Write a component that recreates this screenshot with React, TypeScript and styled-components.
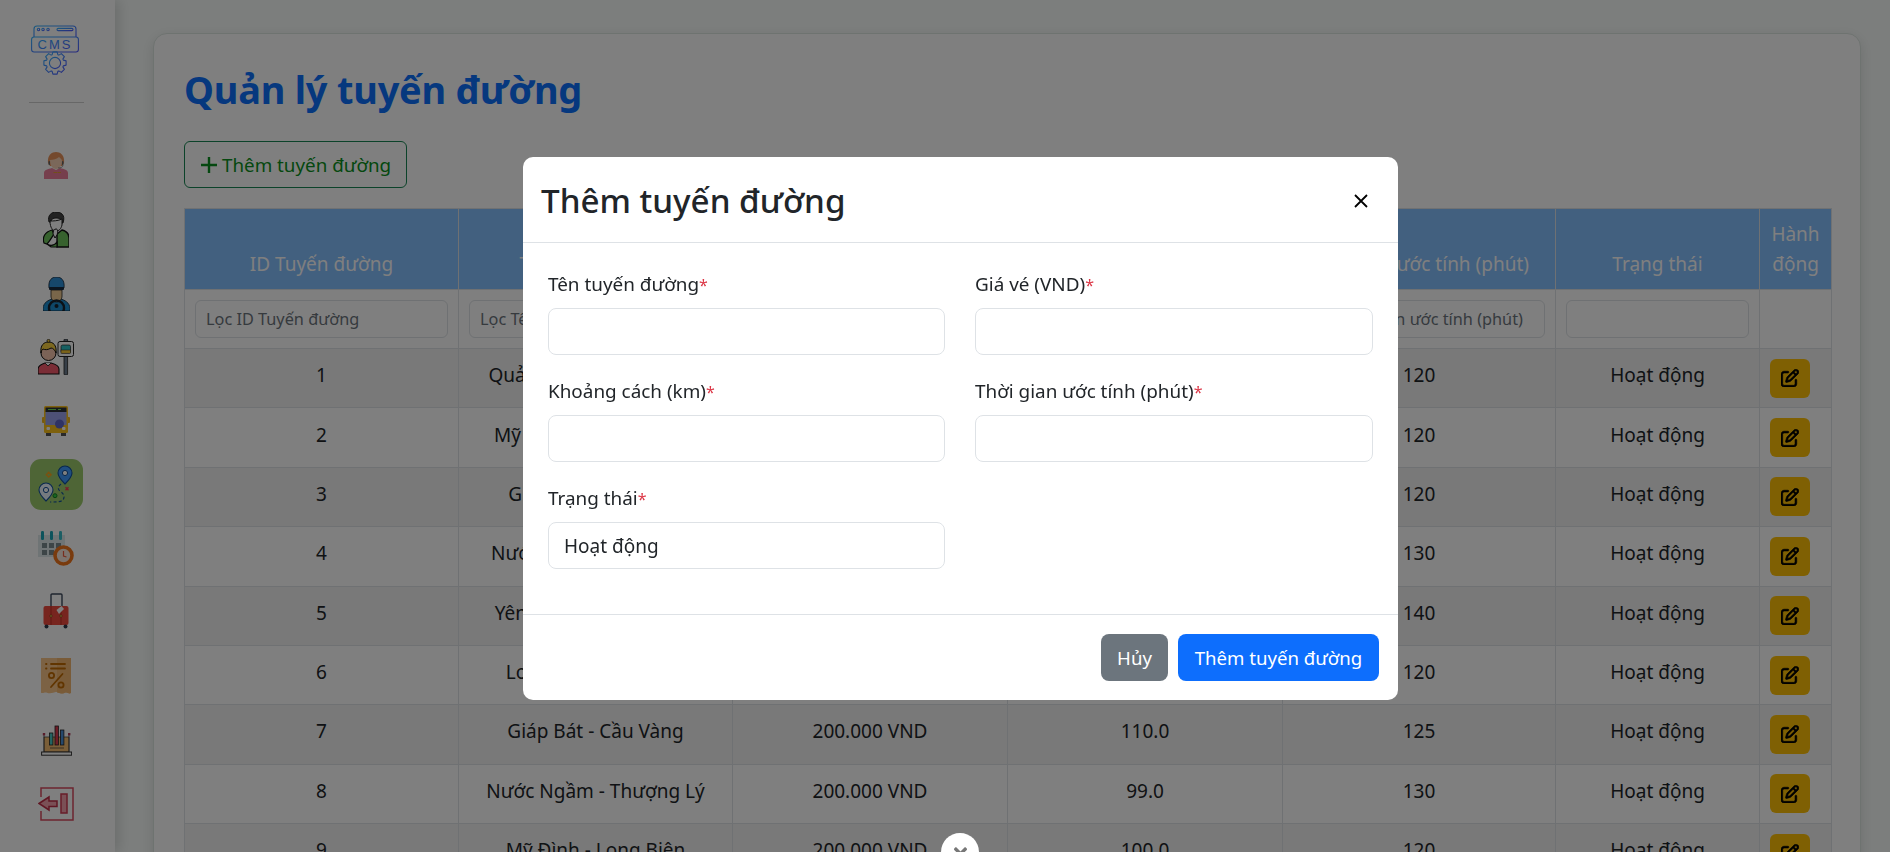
import React from "react";
import styled, { createGlobalStyle } from "styled-components";
import { FaAngleDoubleDown } from "react-icons/fa";
import { FaRegPenToSquare } from "react-icons/fa6";

const FONT = `"Noto Sans", "Open Sans", "Liberation Sans", sans-serif`;

const Global = createGlobalStyle`
  html, body { margin: 0; padding: 0; height: 100%; overflow: hidden; }
  body { font-family: ${FONT}; background: #f9fdfb; color: #212529; }
  * { box-sizing: border-box; }
`;

const Shell = styled.div`
  display: flex;
  width: 1890px;
  height: 852px;
  overflow: hidden;
`;

const Sidebar = styled.aside`
  flex: 0 0 115px;
  display: flex;
  flex-direction: column;
  align-items: center;
  background: #fff;
  box-shadow: 4px 0 12px rgba(0, 0, 0, 0.14);
  padding-top: 25px;
  padding-right: 3px;
  position: relative;
  z-index: 1;
`;

const LogoWrap = styled.div`
  height: 50px;
  display: flex;
  justify-content: center;
  width: 100%;
  padding-right: 2px;
`;

const Rule = styled.hr`
  width: 55px;
  margin: 27px 0 49px;
  border: 0;
  border-top: 1px solid #cfcfcf;
`;

const NavSlot = styled.div<{ $gap: number }>`
  margin-bottom: ${(p) => p.$gap}px;
  display: flex;
  justify-content: center;
`;

const NavItem = styled.div<{ $active?: boolean }>`
  width: ${(p) => (p.$active ? "53px" : "auto")};
  height: ${(p) => (p.$active ? "51px" : "auto")};
  display: flex;
  align-items: center;
  justify-content: center;
  border-radius: 11px;
  background: ${(p) => (p.$active ? "#9ccb6c" : "transparent")};
  & > svg { display: block; }
`;

const Main = styled.main`
  flex: 1;
  min-width: 0;
  padding: 33px 29px 0 38px;
`;

const Card = styled.section`
  background: #fff;
  border: 1px solid #dde6e1;
  border-radius: 14px;
  box-shadow: 0 4px 14px rgba(0, 0, 0, 0.12);
  padding: 26px 29px 40px 30px;
  height: 1000px;
`;

const Title = styled.h1`
  margin: 0 0 23px;
  font-size: 37.9px;
  line-height: 58px;
  font-weight: 700;
  color: #0d70fd;
  letter-spacing: -0.2px;
`;

const OutlineButton = styled.button`
  display: flex;
  align-items: center;
  gap: 5px;
  height: 47px;
  width: 223px;
  padding: 0 0 0 16px;
  border: 1px solid #198754;
  border-radius: 6px;
  background: transparent;
  color: #0a9020;
  font-family: ${FONT};
  font-size: 18.8px;
  line-height: 30px;
  margin-bottom: 20px;
  white-space: nowrap;
`;

const Table = styled.table`
  width: 1647px;
  table-layout: fixed;
  border-collapse: collapse;
  font-size: 19px;
  line-height: 30px;
`;

const HeadCell = styled.th`
  background: #84c0ff;
  color: #fff;
  font-weight: 400;
  text-align: center;
  vertical-align: bottom;
  padding: 10px;
  border: 1px solid #dee2e6;
  height: 81px;
`;

const FilterCell = styled.td`
  padding: 10px;
  border: 1px solid #dee2e6;
  height: 59px;
  background: #fff;
`;

const FilterInput = styled.input`
  display: block;
  width: 100%;
  height: 38px;
  border: 1px solid #dee2e6;
  border-radius: 6px;
  padding: 0 10px;
  font-family: ${FONT};
  font-size: 16.3px;
  background: #fff;
  &::placeholder { color: #6c757d; opacity: 1; }
`;

const FilterSelect = styled.select`
  display: block;
  width: 100%;
  height: 38px;
  border: 1px solid #dee2e6;
  border-radius: 6px;
  appearance: none;
  background: #fff;
`;

const Row = styled.tr<{ $odd: boolean }>`
  background: ${(p) => (p.$odd ? "#f2f2f2" : "#fff")};
`;

const Cell = styled.td`
  text-align: center;
  padding: 0 10px 6px;
  border: 1px solid #dee2e6;
  white-space: nowrap;
`;

const ActionCell = styled.td`
  padding: 9.7px 10px;
  border: 1px solid #dee2e6;
`;

const EditButton = styled.button`
  display: flex;
  align-items: center;
  justify-content: center;
  width: 40px;
  height: 39px;
  border: 0;
  border-radius: 6px;
  background: #ffc107;
  color: #000;
  font-size: 18px;
  padding: 0;
  & path { stroke: currentColor; stroke-width: 18px; }
`;

const Backdrop = styled.div`
  position: fixed;
  inset: 0;
  background: rgba(0, 0, 0, 0.5);
  z-index: 10;
`;

const Modal = styled.div`
  position: fixed;
  left: 523px;
  top: 157px;
  width: 875px;
  height: 543px;
  background: #fff;
  border-radius: 10px;
  z-index: 11;
  display: flex;
  flex-direction: column;
`;

const ModalHeader = styled.header`
  height: 86px;
  flex: none;
  display: flex;
  align-items: center;
  justify-content: space-between;
  padding: 3px 30px 0 18px;
  border-bottom: 1px solid #dee2e6;
`;

const ModalTitle = styled.h2`
  margin: 0;
  font-size: 33.2px;
  font-weight: 500;
  line-height: 48px;
  color: #212529;
`;

const CloseGlyph = styled.button`
  border: 0;
  background: none;
  padding: 0;
  display: flex;
  color: #000;
`;

const ModalBody = styled.div`
  flex: 1;
  padding: 26px 25px 0 25px;
  display: grid;
  grid-template-columns: 397px 398px;
  column-gap: 30px;
  row-gap: 21px;
  align-content: start;
`;

const Field = styled.div`
  display: flex;
  flex-direction: column;
  gap: 9px;
`;

const Label = styled.label`
  display: block;
  height: 30px;
  font-size: 18.9px;
  line-height: 30px;
  color: #212529;
  white-space: nowrap;
`;

const Star = styled.span`
  color: #dc3545;
  font-size: 16px;
  line-height: 0;
`;

const TextInput = styled.input`
  height: 47px;
  width: 100%;
  border: 1px solid #dee2e6;
  border-radius: 8px;
  padding: 0 15px;
  background: #fff;
  font-family: ${FONT};
  font-size: 19px;
  color: #212529;
`;

const ModalFooter = styled.footer`
  flex: none;
  height: 86px;
  border-top: 1px solid #dee2e6;
  display: flex;
  justify-content: flex-end;
  gap: 10px;
  padding: 19px 19px 0 0;
`;

const SolidButton = styled.button<{ $tone: string; $w: number }>`
  height: 47px;
  width: ${(p) => p.$w}px;
  border: 0;
  border-radius: 8px;
  background: ${(p) => p.$tone};
  color: #fff;
  font-family: ${FONT};
  font-size: 18.6px;
  padding: 0;
  white-space: nowrap;
`;

const ScrollHint = styled.div`
  position: fixed;
  left: 941px;
  top: 833px;
  width: 38px;
  height: 38px;
  border-radius: 50%;
  background: #fff;
  z-index: 12;
  display: flex;
  justify-content: center;
  padding-top: 12px;
  color: #777;
  font-size: 21px;
`;

function gearPath(cx: number, cy: number, outer: number, inner: number, teeth: number) {
  const pts: string[] = [];
  const step = (Math.PI * 2) / teeth;
  for (let i = 0; i < teeth; i++) {
    const a = i * step - Math.PI / 2;
    const seq: [number, number][] = [
      [inner, a - step * 0.42],
      [outer, a - step * 0.24],
      [outer, a + step * 0.24],
      [inner, a + step * 0.42],
    ];
    seq.forEach(([r, t]) => {
      pts.push(`${(cx + r * Math.cos(t)).toFixed(2)} ${(cy + r * Math.sin(t)).toFixed(2)}`);
    });
  }
  return `M${pts.join("L")}Z`;
}

const LogoIcon = () => (
  <svg width="48" height="50" viewBox="0 0 48 50" fill="none">
    <defs>
      <linearGradient id="cmsg" x1="0" y1="0" x2="1" y2="1">
        <stop offset="0" stopColor="#35b4ff" />
        <stop offset="1" stopColor="#4f55ff" />
      </linearGradient>
    </defs>
    <g stroke="url(#cmsg)" strokeWidth="1.1">
      <path d="M3 12V4a3 3 0 0 1 3-3h36a3 3 0 0 1 3 3v8" />
      <path d="M3 8h42" />
      <circle cx="7.5" cy="4.5" r="1.2" />
      <circle cx="12" cy="4.5" r="1.2" />
      <circle cx="17" cy="4.5" r="1.2" />
      <rect x="26" y="3.4" width="16" height="2.2" rx="1.1" />
      <rect x="0.6" y="12" width="46.8" height="15" rx="2.5" />
      <path d={gearPath(24, 38, 11.3, 8.8, 8)} strokeLinejoin="round" />
      <circle cx="24" cy="38" r="5.6" />
    </g>
    <text x="24" y="24.2" textAnchor="middle" fontFamily="'Liberation Sans', sans-serif" fontSize="13" letterSpacing="2" fill="url(#cmsg)">CMS</text>
  </svg>
);

const AgentIcon = () => (
  <svg width="24" height="27" viewBox="0 0 24 27">
    <path d="M0 27v-6c0-3 4-4 8-5l4 2 4-2c4 1 8 2 8 5v6z" fill="#ec7f9b" />
    <path d="M4 11C3 3 8 0 12 0s9 3 8 11l-2 3H6z" fill="#e8935a" />
    <path d="M6 8c3 0 7-1 9-3 1 1 3 2 3 4 0 5-3 8-6 8s-6-3-6-9z" fill="#f6d0b4" />
    <path d="M9.5 20.5h4M14 20.5h3" stroke="#e5a030" strokeWidth="1" />
    <rect x="4.5" y="9" width="1.5" height="4" rx=".7" fill="#666" />
    <rect x="18" y="9" width="1.5" height="4" rx=".7" fill="#666" />
    <path d="M19 13c0 2-2 3-5 3" stroke="#555" strokeWidth=".6" fill="none" />
  </svg>
);

const ManIcon = () => (
  <svg width="26" height="36" viewBox="0 0 26 36">
    <path d="M6 10C4 3 9 0 13 0s10 2 7 11l-1 0C19 7 16 6 13 6s-5 1-5 4z" fill="#444" stroke="#222" />
    <path d="M7 9c3 0 8 0 12-2l0 6c-1 4-3 6-6 6s-6-3-6-10z" fill="#fff" stroke="#222" />
    <path d="M1 31c-2-6 1-11 8-13l2 4c-2 3-4 7-7 10z" fill="#6fc45c" stroke="#111" strokeWidth="1.2" />
    <path d="M14 35V22l5-4c4 1 7 4 7 8v9z" fill="#6fc45c" stroke="#111" strokeWidth="1.4" />
    <path d="M4 32c3 2 7 2 10-2v5H8z" fill="#6fc45c" stroke="#111" strokeWidth="1.2" />
    <path d="M10 22c0-3 1-5 3-5s2 3 1 6l-2 3z" fill="#fff" stroke="#111" />
  </svg>
);

const DriverIcon = () => (
  <svg width="27" height="34" viewBox="0 0 27 34">
    <path d="M0 34c-.5-7 3-10 9-12h9c6 2 9.5 5 9 12z" fill="#1d8ed0" stroke="#123" strokeWidth=".8" />
    <path d="M8 13h11v6c0 3-2 6-5.5 6S8 22 8 19z" fill="#f2cd94" stroke="#222" strokeWidth=".8" />
    <path d="M6 11C5 3 9 0 13.5 0S22 3 21 11z" fill="#2d8fd6" stroke="#123" strokeWidth=".8" />
    <rect x="6" y="10" width="15" height="3" rx="1" fill="#162a40" />
    <circle cx="13.5" cy="31" r="7.5" fill="none" stroke="#16222e" strokeWidth="2.4" />
    <circle cx="13.5" cy="29" r="2" fill="#16222e" />
  </svg>
);

const PassengerIcon = () => (
  <svg width="36" height="36" viewBox="0 0 36 36">
    <path d="M0 35v-5c0-3 4-5 7-6h6c4 1 8 3 8 6v5z" fill="#f45b6c" stroke="#111" strokeWidth="1.1" />
    <path d="M7 24l3 3 3-3" fill="#fff" stroke="#111" strokeWidth=".8" />
    <circle cx="10.5" cy="14" r="7.5" fill="#f7c7ae" stroke="#111" strokeWidth="1" />
    <path d="M3 14C2 6 6 3 10.5 3S19 6 18 14c-1-3-3-5-5-5-3 2-6 2-8 1-1 1-2 2-2 4z" fill="#f8d040" stroke="#111" strokeWidth="1" />
    <circle cx="10.5" cy="1.8" r="1.5" fill="#f8d040" stroke="#111" strokeWidth=".7" />
    <rect x="26" y="0" width="3.6" height="36" rx="1" fill="#6f7f90" stroke="#222" strokeWidth=".8" />
    <rect x="20" y="2.5" width="15.5" height="15" rx="2" fill="#fff" stroke="#222" strokeWidth="1" />
    <rect x="23" y="6" width="9.5" height="8" rx="1.5" fill="#2fc0c4" stroke="#222" strokeWidth=".7" />
    <rect x="23" y="11" width="9.5" height="3.2" fill="#f7c936" stroke="#222" strokeWidth=".5" />
  </svg>
);

const BusIcon = () => (
  <svg width="28" height="30" viewBox="0 0 28 30">
    <rect x="4" y="26" width="5" height="4" fill="#555" />
    <rect x="19" y="26" width="5" height="4" fill="#555" />
    <rect x="0" y="11" width="3" height="6" rx="1" fill="#f2b71e" />
    <rect x="25" y="11" width="3" height="6" rx="1" fill="#f2b71e" />
    <rect x="2" y="0" width="24" height="27" rx="1.5" fill="#fcc21b" />
    <rect x="3.5" y="1.5" width="21" height="4.5" fill="#2b3038" />
    <path d="M6 3.5h8M16 3.5h3" stroke="#6fdc55" strokeWidth="1" />
    <rect x="3.5" y="6" width="21" height="13" fill="#9aa2ec" />
    <circle cx="17.5" cy="18" r="4.5" fill="#5e66c8" />
    <rect x="4.5" y="21" width="3.5" height="3" rx="1" fill="#fff" />
    <rect x="20" y="21" width="3.5" height="3" rx="1" fill="#fff" />
  </svg>
);

const RouteIcon = () => (
  <svg width="53" height="51" viewBox="0 0 53 51">
    <path d="M35 25c-4-4-7-7-7-11a7 7 0 0 1 14 0c0 4-3 7-7 11z" fill="#3f9bff" stroke="#12509a" strokeWidth="1.1" />
    <path d="M16 42c-4-4-7-7-7-11a7 7 0 0 1 14 0c0 4-3 7-7 11z" fill="#eaf4ff" stroke="#12509a" strokeWidth="1.1" />
    <circle cx="35" cy="14" r="2.6" fill="#fff" stroke="#12509a" />
    <circle cx="16" cy="31" r="2.6" fill="#fff" stroke="#12509a" />
    <path d="M31 25c-4 3-3 6 0 8 3 2 4 5 2 8-2 2-8 2-13 2" fill="none" stroke="#12509a" strokeWidth="1.2" strokeDasharray="3 2.2" />
    <path d="M18.7 13.3l2.4 2.4-2.4 2.4-2.4-2.4z" fill="none" stroke="#f7a520" strokeWidth="1.4" />
    <path d="M35.5 28.2l3 3m0-3l-3 3" stroke="#ec3a55" strokeWidth="1.4" />
    <circle cx="25" cy="36.7" r="2" fill="#2ecc40" stroke="#127f27" />
  </svg>
);

const CalendarIcon = () => (
  <svg width="36" height="35" viewBox="0 0 36 35">
    <rect x="0" y="4" width="27" height="22" fill="#dfe8ea" />
    <rect x="3" y="0" width="3" height="9" rx="1.2" fill="#1aa7b8" />
    <rect x="12" y="0" width="3" height="9" rx="1.2" fill="#1aa7b8" />
    <rect x="21" y="0" width="3" height="9" rx="1.2" fill="#37bcc8" />
    <g fill="#7b8a8e">
      <rect x="4" y="12" width="5" height="5" /><rect x="11" y="12" width="5" height="5" /><rect x="18" y="12" width="5" height="5" />
      <rect x="4" y="19" width="5" height="5" /><rect x="11" y="19" width="5" height="5" />
    </g>
    <circle cx="25.5" cy="24.5" r="8.5" fill="#fbe9dc" stroke="#f3761c" strokeWidth="3.6" />
    <path d="M25.5 20v5l3 1" fill="none" stroke="#ef5a3c" strokeWidth="1.2" />
  </svg>
);

const SuitcaseIcon = () => (
  <svg width="26" height="36" viewBox="0 0 26 36">
    <path d="M8 14V2a1 1 0 0 1 1-1h9a1 1 0 0 1 1 1v12" fill="none" stroke="#3e4a5e" strokeWidth="1.4" />
    <rect x="0.5" y="13" width="25" height="19" rx="2" fill="#ef4b3f" />
    <path d="M8 13v19M18 13v19" stroke="#b32a20" strokeWidth=".8" />
    <path d="M13.5 17l5-4 2.5 3-5 5z" fill="#fff" />
    <circle cx="8" cy="23" r="1.2" fill="#f6c64e" stroke="#5a2a10" strokeWidth=".5" />
    <circle cx="18" cy="23" r="1.2" fill="#f6c64e" stroke="#5a2a10" strokeWidth=".5" />
    <circle cx="3.5" cy="33.5" r="2" fill="#2f3a4c" />
    <circle cx="22.5" cy="33.5" r="2" fill="#2f3a4c" />
  </svg>
);

const DiscountIcon = () => (
  <svg width="30" height="36" viewBox="0 0 30 36">
    <path d="M0 0h30v35c-2.5 1.5-3.5-1.5-6-.3s-3.5 1.3-6 0-3.5-.3-6 0-3.5 1-6 0-3.5 1-6 0z" fill="#f8c488" />
    <path d="M16 0h14v35c-2.5 1.5-3.5-1.5-6-.3s-3.5.6-8-.3z" fill="#f3b771" />
    <g stroke="#c26a00" strokeWidth="1.8" strokeLinecap="round" fill="none">
      <path d="M10 6h14M10 10.5h14M5 6h.5M5 10.5h.5" />
      <path d="M21.5 16L10 29" />
      <circle cx="10.5" cy="17.5" r="2.6" />
      <circle cx="20" cy="27" r="2.6" />
    </g>
  </svg>
);

const ChartIcon = () => (
  <svg width="31" height="31" viewBox="0 0 31 31">
    <rect x="3" y="12" width="25" height="15" fill="#f5bd70" stroke="#333" strokeWidth=".7" />
    <path d="M3 9v18M28 9v18M9 23h14" stroke="#333" strokeWidth=".7" />
    <rect x="1.8" y="8" width="2.4" height="2.4" fill="#b03a58" />
    <rect x="27" y="8" width="2.4" height="2.4" fill="#b03a58" />
    <rect x="8.5" y="8" width="3.4" height="12" fill="#49c6c2" stroke="#222" strokeWidth=".8" />
    <rect x="14" y="1" width="3.4" height="19" fill="#d8384e" stroke="#222" strokeWidth=".8" />
    <rect x="19.5" y="5" width="3.4" height="15" fill="#4a90d9" stroke="#222" strokeWidth=".8" />
    <rect x="0.6" y="27" width="30" height="3.2" fill="#fff" stroke="#333" strokeWidth="1" />
  </svg>
);

const LogoutIcon = () => (
  <svg width="36" height="34" viewBox="0 0 36 34" fill="none">
    <path d="M3 10V1h32v32H3v-9" stroke="#d94a60" strokeWidth="1.5" />
    <rect x="23" y="7" width="6" height="19" fill="#f4a0ac" stroke="#d03a52" strokeWidth="1.5" />
    <path d="M1 16.5L11 10v4h8v5.5h-8V23z" fill="#f4a0ac" stroke="#c02f48" strokeWidth="1.5" />
  </svg>
);

const rows = [
  ["1", "Quảng Ninh - Long Biên", "200.000 VND", "100.0", "120"],
  ["2", "Mỹ Đình - Thái Nguyên", "200.000 VND", "100.0", "120"],
  ["3", "Giáp Bát - Lạng Sơn", "200.000 VND", "100.0", "120"],
  ["4", "Nước Ngầm - Cao Bằng", "200.000 VND", "99.0", "130"],
  ["5", "Yên Nghĩa - Thượng Lý", "200.000 VND", "110.0", "140"],
  ["6", "Long Biên - Mỹ Đình", "200.000 VND", "100.0", "120"],
  ["7", "Giáp Bát - Cầu Vàng", "200.000 VND", "110.0", "125"],
  ["8", "Nước Ngầm - Thượng Lý", "200.000 VND", "99.0", "130"],
  ["9", "Mỹ Đình - Long Biên", "200.000 VND", "100.0", "120"],
];

const widths = [274, 274, 275, 275, 273, 204, 72];
const heads = ["ID Tuyến đường", "Tên tuyến đường", "Giá vé", "Khoảng cách (km)", "Thời gian ước tính (phút)", "Trạng thái", "Hành động"];
const filters = ["Lọc ID Tuyến đường", "Lọc Tên tuyến đường", "Lọc Giá vé", "Lọc Khoảng cách", "Lọc Thời gian ước tính (phút)"];

const navIcons = [AgentIcon, ManIcon, DriverIcon, PassengerIcon, BusIcon, RouteIcon, CalendarIcon, SuitcaseIcon, DiscountIcon, ChartIcon, LogoutIcon];
const gaps = [33, 29, 28, 31, 23, 21, 27, 29, 31, 31, 0];

export default function App() {
  return (
    <Shell>
      <Global />
      <Sidebar>
        <LogoWrap><LogoIcon /></LogoWrap>
        <Rule />
        {navIcons.map((Icon, i) => (
          <NavSlot key={i} $gap={gaps[i]}>
            <NavItem $active={i === 5}>
              <Icon />
            </NavItem>
          </NavSlot>
        ))}
      </Sidebar>
      <Main>
        <Card>
          <Title>Quản lý tuyến đường</Title>
          <OutlineButton>
            <svg width="16" height="16" viewBox="0 0 16 16"><path d="M8 0v16M0 8h16" stroke="currentColor" strokeWidth="2.4" /></svg>
            Thêm tuyến đường
          </OutlineButton>
          <Table>
            <colgroup>{widths.map((w, i) => <col key={i} style={{ width: w }} />)}</colgroup>
            <thead>
              <tr>{heads.map((h) => <HeadCell key={h}>{h}</HeadCell>)}</tr>
              <tr>
                {filters.map((f) => <FilterCell key={f}><FilterInput placeholder={f} /></FilterCell>)}
                <FilterCell><FilterSelect /></FilterCell>
                <FilterCell />
              </tr>
            </thead>
            <tbody>
              {rows.map((r, i) => (
                <Row key={r[0]} $odd={i % 2 === 0}>
                  {r.map((c, j) => <Cell key={j}>{c}</Cell>)}
                  <Cell>Hoạt động</Cell>
                  <ActionCell><EditButton aria-label="Sửa"><FaRegPenToSquare /></EditButton></ActionCell>
                </Row>
              ))}
            </tbody>
          </Table>
        </Card>
      </Main>
      <Backdrop />
      <Modal>
        <ModalHeader>
          <ModalTitle>Thêm tuyến đường</ModalTitle>
          <CloseGlyph aria-label="Đóng">
            <svg width="14" height="14" viewBox="0 0 14 14"><path d="M1 1l12 12M13 1L1 13" stroke="currentColor" strokeWidth="1.8" /></svg>
          </CloseGlyph>
        </ModalHeader>
        <ModalBody>
          <Field><Label>Tên tuyến đường<Star>*</Star></Label><TextInput /></Field>
          <Field><Label>Giá vé (VND)<Star>*</Star></Label><TextInput /></Field>
          <Field><Label>Khoảng cách (km)<Star>*</Star></Label><TextInput /></Field>
          <Field><Label>Thời gian ước tính (phút)<Star>*</Star></Label><TextInput /></Field>
          <Field><Label>Trạng thái<Star>*</Star></Label><TextInput defaultValue="Hoạt động" /></Field>
        </ModalBody>
        <ModalFooter>
          <SolidButton $tone="#6c757d" $w={67}>Hủy</SolidButton>
          <SolidButton $tone="#0d6efd" $w={201}>Thêm tuyến đường</SolidButton>
        </ModalFooter>
      </Modal>
      <ScrollHint><FaAngleDoubleDown /></ScrollHint>
    </Shell>
  );
}
